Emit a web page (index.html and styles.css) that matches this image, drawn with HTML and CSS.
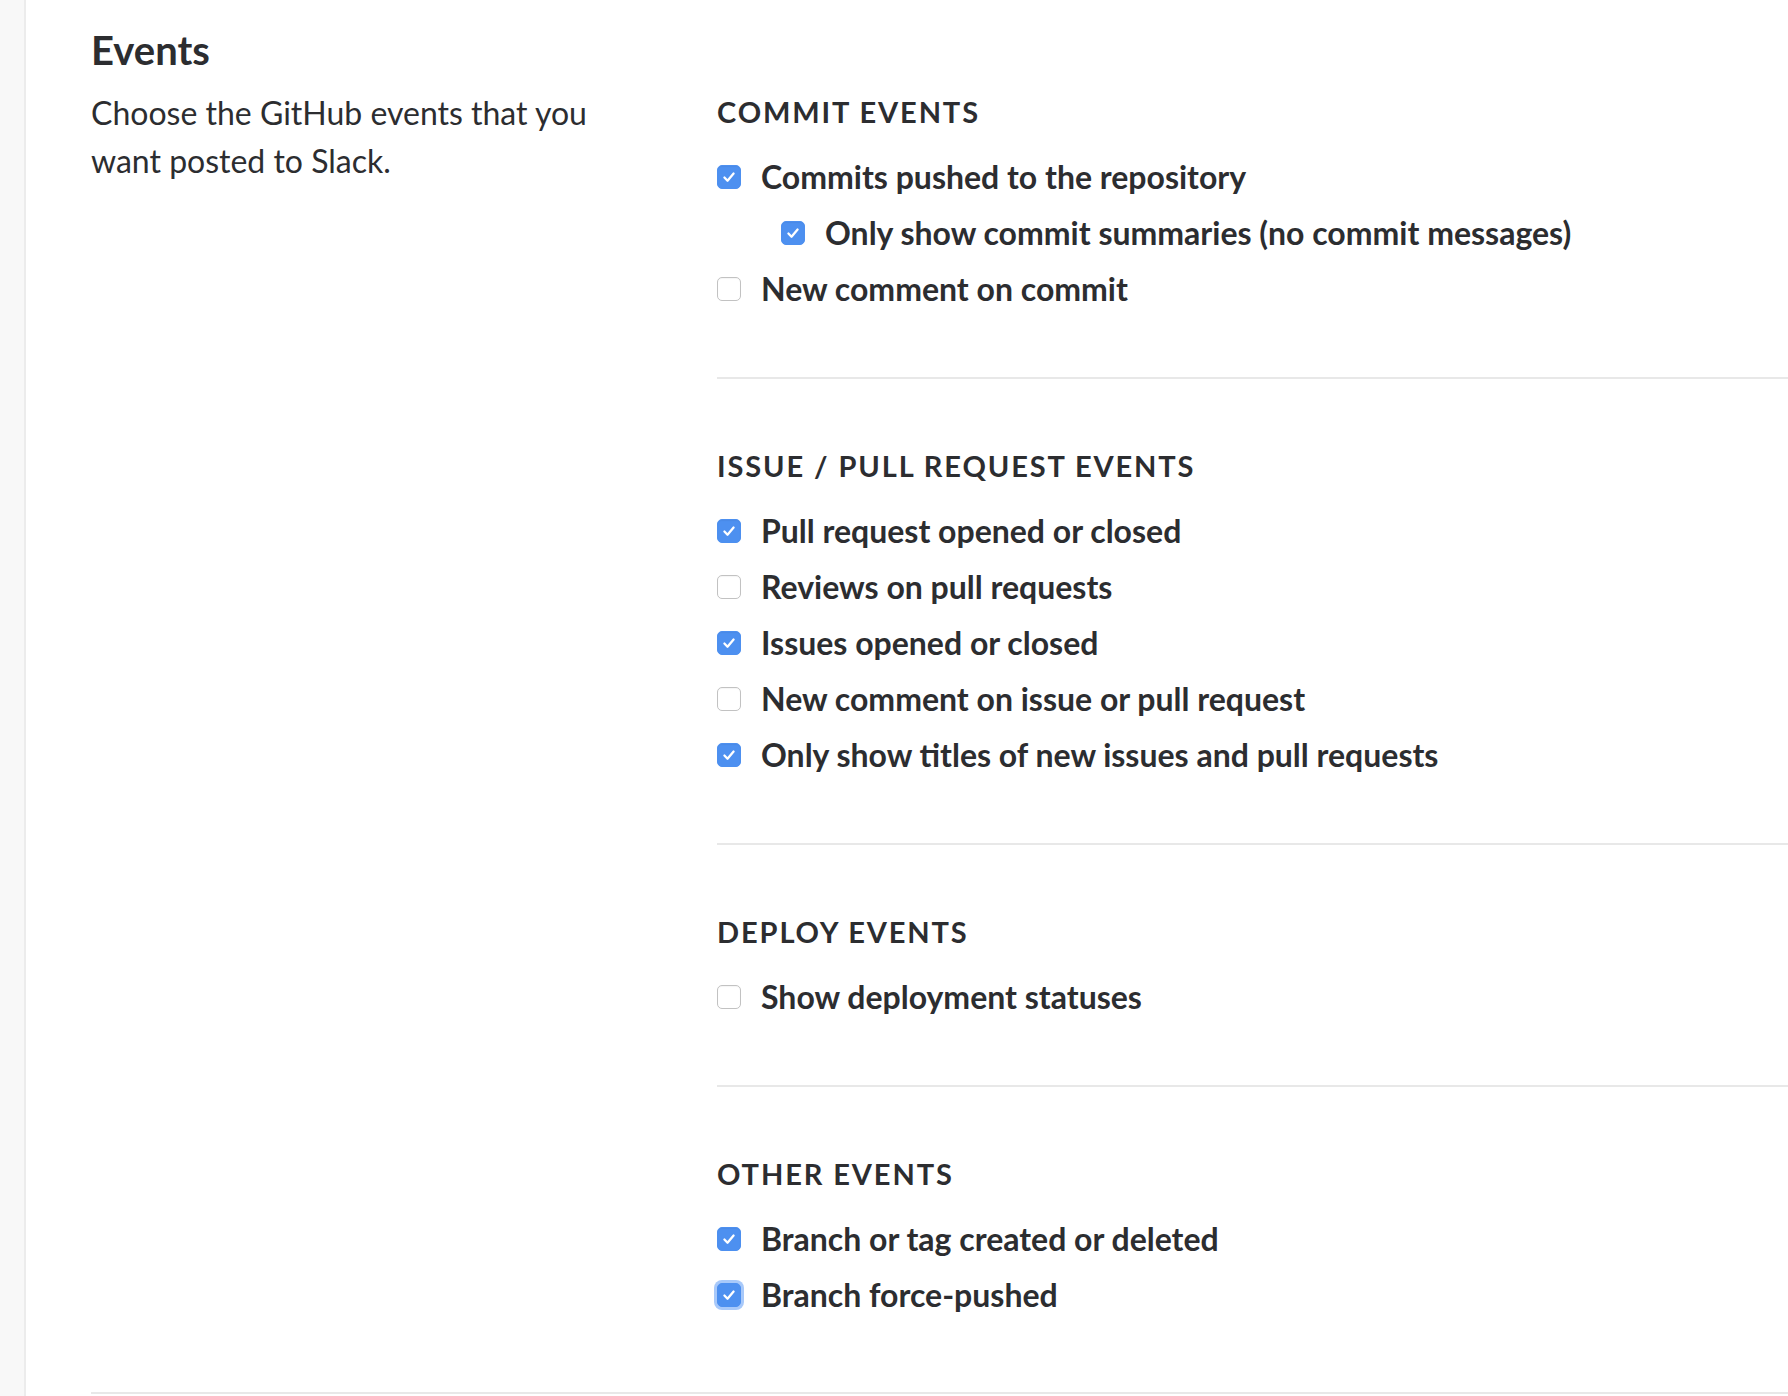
FILE: index.html
```html
<!DOCTYPE html>
<html lang="en">
<head>
<meta charset="utf-8">
<title>Events</title>
<link rel="stylesheet" href="styles.css">
</head>
<body>
<div class="layout">
  <div class="sidebar"></div>
  <main class="main">
    <h1 class="title">Events</h1>
    <div class="row">
      <p class="desc">Choose the GitHub events that you want posted to Slack.</p>
      <div class="sections">
        <section class="section">
          <h2 class="section-title">Commit events</h2>
          <ul class="options">
            <li class="option"><span class="box checked"><svg viewBox="0 0 24 24"><path d="M7 12.5l3.4 3.6L17 8.2"/></svg></span><span class="label">Commits pushed to the repository</span></li>
            <li class="option nested"><span class="box checked"><svg viewBox="0 0 24 24"><path d="M7 12.5l3.4 3.6L17 8.2"/></svg></span><span class="label">Only show commit summaries (no commit messages)</span></li>
            <li class="option"><span class="box"></span><span class="label">New comment on commit</span></li>
          </ul>
        </section>
        <section class="section">
          <h2 class="section-title">Issue / Pull request events</h2>
          <ul class="options">
            <li class="option"><span class="box checked"><svg viewBox="0 0 24 24"><path d="M7 12.5l3.4 3.6L17 8.2"/></svg></span><span class="label">Pull request opened or closed</span></li>
            <li class="option"><span class="box"></span><span class="label">Reviews on pull requests</span></li>
            <li class="option"><span class="box checked"><svg viewBox="0 0 24 24"><path d="M7 12.5l3.4 3.6L17 8.2"/></svg></span><span class="label">Issues opened or closed</span></li>
            <li class="option"><span class="box"></span><span class="label">New comment on issue or pull request</span></li>
            <li class="option"><span class="box checked"><svg viewBox="0 0 24 24"><path d="M7 12.5l3.4 3.6L17 8.2"/></svg></span><span class="label">Only show titles of new issues and pull requests</span></li>
          </ul>
        </section>
        <section class="section">
          <h2 class="section-title">Deploy events</h2>
          <ul class="options">
            <li class="option"><span class="box"></span><span class="label">Show deployment statuses</span></li>
          </ul>
        </section>
        <section class="section last">
          <h2 class="section-title">Other events</h2>
          <ul class="options">
            <li class="option"><span class="box checked"><svg viewBox="0 0 24 24"><path d="M7 12.5l3.4 3.6L17 8.2"/></svg></span><span class="label">Branch or tag created or deleted</span></li>
            <li class="option"><span class="box checked focused"><svg viewBox="0 0 24 24"><path d="M7 12.5l3.4 3.6L17 8.2"/></svg></span><span class="label">Branch force-pushed</span></li>
          </ul>
        </section>
      </div>
    </div>
  </main>
</div>
</body>
</html>
```

FILE: styles.css
```css
html, body {
  margin: 0;
  padding: 0;
  background: #ffffff;
}

body {
  font-family: Lato, "Open Sans", "Liberation Sans", sans-serif;
  color: #2c2d30;
  overflow: hidden;
}

.layout {
  display: flex;
  min-height: 1396px;
}

.sidebar {
  width: 24px;
  flex: 0 0 24px;
  background: #f8f8f8;
  border-right: 2px solid #ececec;
}

.main {
  flex: 1;
  padding: 26px 0 0 65px;
}

.title {
  margin: 0 0 15px;
  font-size: 40px;
  line-height: 48px;
  font-weight: 700;
}

.row {
  display: grid;
  grid-template-columns: 626px 1fr;
  padding-bottom: 69px;
  border-bottom: 2px solid #e8e8e8;
}

.desc {
  margin: 0;
  width: 540px;
  font-size: 32px;
  line-height: 48px;
  font-weight: 400;
}

.section {
  padding: 71px 0 60px;
  border-bottom: 2px solid #e8e8e8;
}

.section:first-child {
  padding-top: 7px;
}

.section.last {
  padding-bottom: 0;
  border-bottom: none;
}

.section-title {
  margin: 0 0 21px;
  font-size: 29px;
  line-height: 32px;
  font-weight: 700;
  letter-spacing: 1.9px;
  text-transform: uppercase;
}

.options {
  list-style: none;
  margin: 0;
  padding: 0;
}

.option {
  display: flex;
  align-items: center;
  height: 56px;
  font-size: 32px;
  font-weight: 700;
}

.option.nested {
  padding-left: 64px;
}

.label {
  position: relative;
  top: -1px;
}

.box {
  flex: 0 0 auto;
  box-sizing: border-box;
  width: 24px;
  height: 24px;
  margin-right: 20px;
  border-radius: 5px;
  border: 1.5px solid #c2c2c2;
  background: #ffffff;
  box-shadow: inset 0 1px 1px rgba(0, 0, 0, 0.04);
  display: flex;
  align-items: center;
  justify-content: center;
}

.box.checked {
  background: #4d90f0;
  border-color: #4d90f0;
}

.box.focused {
  box-shadow: 0 0 0 3px #a8c9fa;
}

.box svg {
  width: 24px;
  height: 24px;
  fill: none;
  stroke: #ffffff;
  stroke-width: 2.5;
  stroke-linecap: round;
  stroke-linejoin: round;
}
```
